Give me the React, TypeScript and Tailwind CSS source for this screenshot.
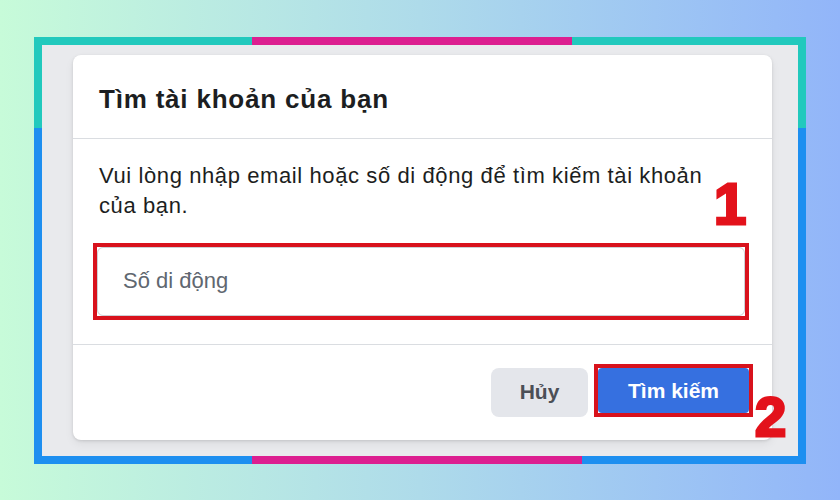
export default function App() {
	return (
		<div className="relative w-[840px] h-[500px] flex items-center justify-center bg-gradient-to-r from-[#c7fbd9] via-[#aedbea] to-[#92b5f9] font-['Liberation_Sans',Arial,sans-serif]">
			{/* framed screenshot */}
			<div className="flex flex-col w-[772px] h-[427px]">
				<div className="flex h-[8px]">
					<div className="w-[218px] bg-[#22c9bd]" />
					<div className="w-[320px] bg-[#dc1f90]" />
					<div className="flex-1 bg-[#22c9bd]" />
				</div>

				<div className="flex flex-1">
					<div className="w-[8px] flex flex-col">
						<div className="h-[83px] bg-[#22c9bd]" />
						<div className="flex-1 bg-[#1d8ff0]" />
					</div>

					<div className="flex-1 bg-[#e9eaed] pl-[31px] pr-[26px] pt-[10px] pb-[16px] flex">
						<div className="flex-1 flex flex-col bg-white rounded-lg shadow-[0_1px_3px_rgba(0,0,0,0.12),0_4px_10px_rgba(0,0,0,0.06)]">
							<div className="px-[26px] pt-[28px] pb-[23px] border-b border-[#dadde1]">
								<h1 className="text-[26px] leading-[32px] font-bold tracking-[0.8px] text-[#1c1e21]">
									Tìm tài khoản của bạn
								</h1>
							</div>

							<div className="pl-[20px] pr-[23px] pt-[22px] pb-[24px] border-b border-[#dadde1]">
								<p className="w-[630px] pl-[6px] text-[22px] leading-[30px] tracking-[0.6px] text-[#1c1e21]">
									Vui lòng nhập email hoặc số di động để tìm kiếm tài khoản của bạn.
								</p>
								<div className="mt-[22px] border-4 border-[#d8121c] h-[77px]">
									<input
										className="w-full h-full border border-[#ccd0d5] rounded-md px-[25px] text-[22px] text-[#1c1e21] placeholder:text-[#606770] outline-none font-['Liberation_Sans',Arial,sans-serif]"
										placeholder="Số di động"
									/>
								</div>
							</div>

							<div className="flex-1 flex items-center justify-end gap-[6px] pr-[19px]">
								<button className="w-[97px] h-[49px] rounded-lg bg-[#e4e6eb] text-[21px] font-bold text-[#4b4f56]">
									Hủy
								</button>
								<div className="border-4 border-[#d8121c] -mt-[3px]">
									<button className="block w-[151px] h-[45px] rounded-sm bg-[#3670e0] text-[21px] font-bold text-white">
										Tìm kiếm
									</button>
								</div>
							</div>
						</div>
					</div>

					<div className="w-[8px] flex flex-col">
						<div className="h-[83px] bg-[#22c9bd]" />
						<div className="flex-1 bg-[#1d8ff0]" />
					</div>
				</div>

				<div className="flex h-[8px]">
					<div className="w-[218px] bg-[#1d8ff0]" />
					<div className="w-[330px] bg-[#dc1f90]" />
					<div className="flex-1 bg-[#1d8ff0]" />
				</div>
			</div>

			{/* step markers */}
			<span className="absolute left-[714px] top-[175px] text-[58px] leading-none font-bold text-[#e3121b] [-webkit-text-stroke:3px_#e3121b]">
				1
			</span>
			<span className="absolute left-[755px] top-[389px] text-[56px] leading-none font-bold text-[#e3121b] [-webkit-text-stroke:3px_#e3121b]">
				2
			</span>
		</div>
	);
}
